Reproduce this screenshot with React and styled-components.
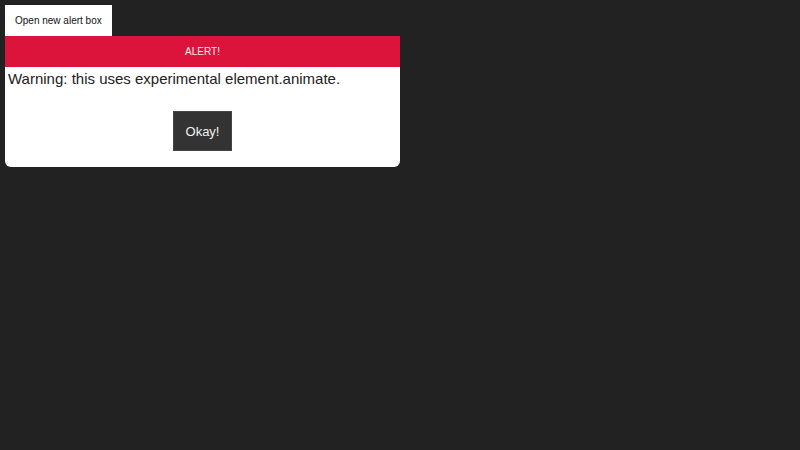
import styled, { createGlobalStyle } from 'styled-components';

const GlobalStyle = createGlobalStyle`
  html, body {
    margin: 0;
    background: #222222;
    font-family: "Liberation Sans", Arial, sans-serif;
  }
  body {
    padding: 5px;
  }
`;

const Page = styled.div`
  display: flex;
  flex-direction: column;
  align-items: flex-start;
  width: 395px;
`;

const OpenButton = styled.button`
  height: 31px;
  padding: 0 10px;
  border: none;
  background: #ffffff;
  color: #111111;
  font-family: inherit;
  font-size: 10px;
  cursor: pointer;
`;

const AlertBox = styled.div`
  width: 100%;
  background: #ffffff;
  border-radius: 0 0 6px 6px;
  overflow: hidden;
`;

const AlertHeader = styled.div`
  height: 31px;
  display: flex;
  align-items: center;
  justify-content: center;
  background: #dc143c;
  color: #fde8ec;
  font-size: 10px;
`;

const AlertBody = styled.div`
  display: flex;
  flex-direction: column;
  align-items: center;
  padding: 1px 3px 16px;
`;

const Message = styled.p`
  align-self: stretch;
  margin: 0 0 21px;
  font-size: 15px;
  line-height: 22px;
  color: #222222;
`;

const OkayButton = styled.button`
  width: 59px;
  height: 40px;
  border: 1px solid #444444;
  background: #333333;
  color: #f2f2f2;
  font-family: inherit;
  font-size: 13px;
  cursor: pointer;
`;

export default function App() {
  return (
    <>
      <GlobalStyle />
      <Page>
        <OpenButton>Open new alert box</OpenButton>
        <AlertBox>
          <AlertHeader>ALERT!</AlertHeader>
          <AlertBody>
            <Message>Warning: this uses experimental element.animate.</Message>
            <OkayButton>Okay!</OkayButton>
          </AlertBody>
        </AlertBox>
      </Page>
    </>
  );
}
